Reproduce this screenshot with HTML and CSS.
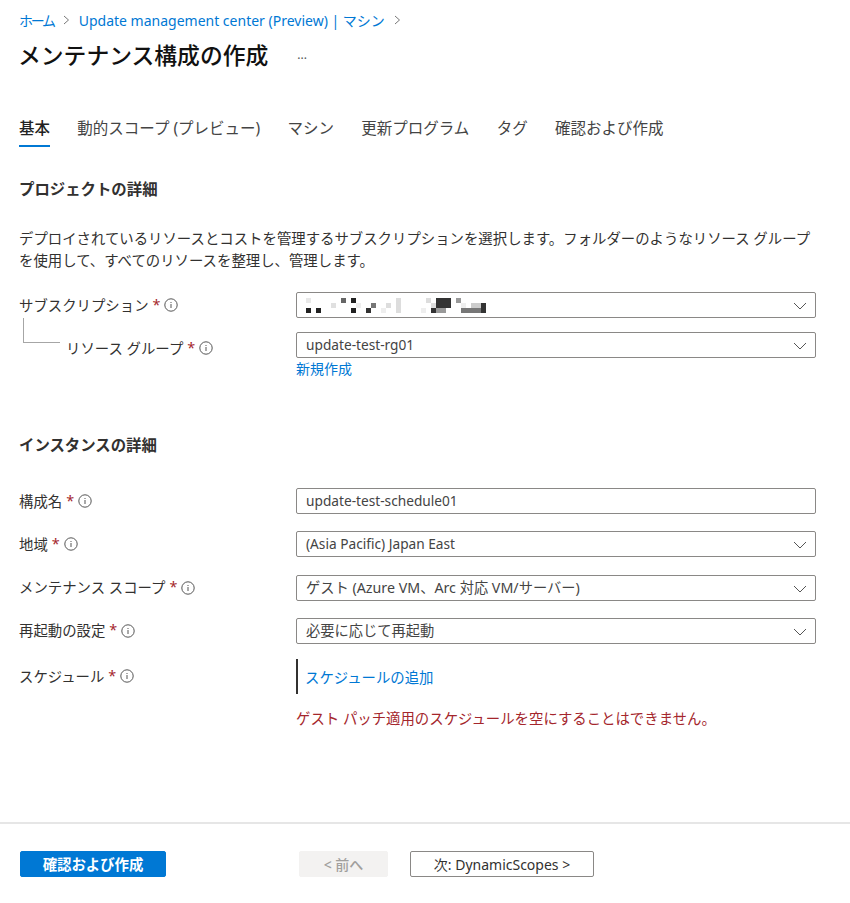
FILE: index.html
```html
<!DOCTYPE html>
<html lang="ja">
<head>
    <meta charset="UTF-8">
    <meta name="viewport" content="width=device-width, initial-scale=1.0">
    <title>メンテナンス構成の作成</title>
    <link rel="stylesheet" href="styles.css">
</head>
<body>

    <svg class="defs" width="0" height="0">
        <symbol id="info" viewBox="0 0 14 14">
            <circle cx="7" cy="7" r="6.2" fill="none" stroke="#555" stroke-width="1"/>
            <rect x="6.5" y="6" width="1" height="4" fill="#555"/>
            <rect x="6.5" y="4" width="1" height="1" fill="#555"/>
        </symbol>
        <symbol id="chevron" viewBox="0 0 14 8">
            <path d="M1 1l6 6 6-6" fill="none" stroke="#555" stroke-width="1"/>
        </symbol>
    </svg>

    <div class="page">
        <nav class="breadcrumb">
            <a class="crumb-home" href="#">ホーム</a>
            <svg class="crumb-sep" viewBox="0 0 7 10"><path d="M1 1l4.500 4-4.500 4" fill="none" stroke="#777"/></svg>
            <a href="#">Update management center (Preview) | マシン</a>
            <svg class="crumb-sep" viewBox="0 0 7 10"><path d="M1 1l4.500 4-4.500 4" fill="none" stroke="#777"/></svg>
        </nav>

        <div class="title-row">
            <h1>メンテナンス構成の作成</h1>
            <span class="more">...</span>
        </div>

        <div class="tabs">
            <a class="tab active" href="#">基本</a>
            <a class="tab" href="#">動的スコープ (プレビュー)</a>
            <a class="tab" href="#">マシン</a>
            <a class="tab" href="#">更新プログラム</a>
            <a class="tab" href="#">タグ</a>
            <a class="tab" href="#">確認および作成</a>
        </div>

        <h2 class="section-project">プロジェクトの詳細</h2>
        <p class="description">デプロイされているリソースとコストを管理するサブスクリプションを選択します。フォルダーのようなリソース グループを使用して、すべてのリソースを整理し、管理します。</p>

        <div class="form form-project">
            <div class="row">
                <label>サブスクリプション <span class="req">*</span> <svg class="info"><use href="#info"/></svg></label>
                <div class="field select">
                    <svg class="mosaic" width="190" height="15" viewBox="0 0 38 3" shape-rendering="crispEdges">
                        <rect x="0" y="0" width="1" height="1" fill="#e8e8e8"/>
                        <rect x="0" y="2" width="1" height="1" fill="#222"/>
                        <rect x="2" y="2" width="1" height="1" fill="#222"/>
                        <rect x="5" y="1" width="1" height="1" fill="#e0e0e0"/>
                        <rect x="7" y="0" width="1" height="1" fill="#666"/>
                        <rect x="9" y="0" width="1" height="1" fill="#222"/>
                        <rect x="9" y="2" width="1" height="1" fill="#222"/>
                        <rect x="10" y="1" width="1" height="1" fill="#eee"/>
                        <rect x="12" y="2" width="1" height="1" fill="#333"/>
                        <rect x="13" y="1" width="1" height="1" fill="#777"/>
                        <rect x="15" y="2" width="1" height="1" fill="#eee"/>
                        <rect x="16" y="1" width="1" height="1" fill="#ddd"/>
                        <rect x="18" y="0" width="1" height="3" fill="#ddd"/>
                        <rect x="23" y="2" width="1" height="1" fill="#eee"/>
                        <rect x="24" y="0" width="1" height="1" fill="#ddd"/>
                        <rect x="25" y="1" width="1" height="1" fill="#ddd"/>
                        <rect x="25" y="2" width="1" height="1" fill="#333"/>
                        <rect x="26" y="0" width="3" height="2" fill="#333"/>
                        <rect x="26" y="2" width="2" height="1" fill="#999"/>
                        <rect x="30" y="0" width="1" height="1" fill="#999"/>
                        <rect x="31" y="1" width="1" height="1" fill="#eee"/>
                        <rect x="31" y="2" width="4" height="1" fill="#777"/>
                        <rect x="33" y="1" width="2" height="1" fill="#ccc"/>
                        <rect x="35" y="1" width="1" height="2" fill="#333"/>
                    </svg>
                    <svg class="chevron"><use href="#chevron"/></svg>
                </div>
            </div>
            <div class="row row-child">
                <label>リソース グループ <span class="req">*</span> <svg class="info"><use href="#info"/></svg></label>
                <div>
                    <div class="field select">update-test-rg01<svg class="chevron"><use href="#chevron"/></svg></div>
                    <a class="link new-link" href="#">新規作成</a>
                </div>
            </div>
        </div>

        <h2 class="section-instance">インスタンスの詳細</h2>

        <div class="form form-instance">
            <div class="row">
                <label>構成名 <span class="req">*</span> <svg class="info"><use href="#info"/></svg></label>
                <div class="field">update-test-schedule01</div>
            </div>
            <div class="row">
                <label>地域 <span class="req">*</span> <svg class="info"><use href="#info"/></svg></label>
                <div class="field select">(Asia Pacific) Japan East<svg class="chevron"><use href="#chevron"/></svg></div>
            </div>
            <div class="row">
                <label>メンテナンス スコープ <span class="req">*</span> <svg class="info"><use href="#info"/></svg></label>
                <div class="field field-ja select">ゲスト (Azure VM、Arc 対応 VM/サーバー)<svg class="chevron"><use href="#chevron"/></svg></div>
            </div>
            <div class="row">
                <label>再起動の設定 <span class="req">*</span> <svg class="info"><use href="#info"/></svg></label>
                <div class="field field-ja select">必要に応じて再起動<svg class="chevron"><use href="#chevron"/></svg></div>
            </div>
            <div class="row row-schedule">
                <label>スケジュール <span class="req">*</span> <svg class="info"><use href="#info"/></svg></label>
                <div>
                    <div class="schedule-box"><a class="link" href="#">スケジュールの追加</a></div>
                    <p class="error">ゲスト パッチ適用のスケジュールを空にすることはできません。</p>
                </div>
            </div>
        </div>
    </div>

    <footer>
        <button class="btn btn-primary">確認および作成</button>
        <button class="btn btn-disabled">&lt; 前へ</button>
        <button class="btn btn-next">次: DynamicScopes &gt;</button>
    </footer>

</body>
</html>
```

FILE: styles.css
```css
html, body {
    margin: 0;
    padding: 0;
}
body {
    width: 850px;
    height: 903px;
    overflow: hidden;
    background-color: #fff;
    color: #323130;
    font-family: "Noto Sans", "Noto Sans CJK JP", sans-serif;
    font-size: 14px;
}
a {
    text-decoration: none;
}
.defs {
    position: absolute;
}
.page {
    height: 822px;
    padding: 0 19px;
    box-sizing: border-box;
}

/* Breadcrumb and title */
.breadcrumb {
    display: flex;
    align-items: center;
    gap: 9px;
    height: 20px;
    padding-top: 10px;
    font-size: 14px;
}
.breadcrumb a {
    color: #0078d4;
}
.breadcrumb .crumb-home {
    letter-spacing: -2.3px;
}
.crumb-sep {
    width: 7px;
    height: 10px;
}
.title-row {
    display: flex;
    align-items: center;
    height: 34px;
    margin-top: 7px;
}
h1 {
    margin: 0 0 0 -1px;
    font-size: 22.8px;
    font-weight: 500;
    color: #111;
}
.more {
    margin-left: 29px;
    font-size: 12px;
    color: #555;
}

/* Tabs */
.tabs {
    display: flex;
    gap: 27.3px;
    margin-top: 45px;
}
.tab {
    height: 31px;
    line-height: 24px;
    font-size: 15.5px;
    color: #444;
    box-sizing: border-box;
}
.tab.active {
    color: #222;
    font-weight: 500;
    border-bottom: 2px solid #0078d4;
}

/* Sections */
h2 {
    margin: 0;
    font-size: 15.4px;
    font-weight: 700;
    line-height: 22px;
    color: #323130;
}
.section-project {
    margin-top: 32px;
}
.section-instance {
    margin-top: 56px;
}
.description {
    width: 800px;
    margin: 27px 0 0;
    font-size: 14.4px;
    line-height: 22px;
}

/* Form */
.form-project {
    margin-top: 20px;
}
.form-instance {
    margin-top: 31px;
}
.row {
    display: grid;
    grid-template-columns: 277px 520px;
    margin-bottom: 14px;
}
.form-instance .row {
    margin-bottom: 17.33px;
}
label {
    display: flex;
    align-items: center;
    gap: 4px;
    height: 26px;
    padding-bottom: 2px;
    box-sizing: border-box;
    font-size: 14.4px;
}
.row-child {
    position: relative;
}
.row-child label {
    height: 32px;
    padding-left: 47px;
}
/* tree line from the subscription row to the resource group row */
.row-child::before {
    content: "";
    position: absolute;
    left: 4px;
    top: -14px;
    width: 36px;
    height: 24px;
    border-left: 1px solid #a6a6a6;
    border-bottom: 1px solid #a6a6a6;
}
.req {
    color: #a4262c;
}
.info {
    width: 14px;
    height: 14px;
    margin-top: 2px;
}
.field {
    display: flex;
    align-items: center;
    height: 26px;
    padding: 0 9px 2px;
    box-sizing: border-box;
    border: 1px solid #8a8886;
    border-radius: 2px;
    font-size: 13.7px;
    color: #444;
}
.field-ja {
    font-size: 14.25px;
}
.select {
    position: relative;
}
.mosaic {
    margin-top: 2px;
}
.chevron {
    position: absolute;
    right: 8px;
    top: 9px;
    width: 14px;
    height: 8px;
}
.link {
    color: #0078d4;
}
.new-link {
    display: block;
    margin-top: 1px;
    line-height: 20px;
    font-size: 14px;
}
.row-schedule {
    margin-top: -2px;
}
.schedule-box {
    display: flex;
    align-items: center;
    height: 35px;
    padding-left: 7px;
    border-left: 2px solid #323130;
    font-size: 14.4px;
}
.error {
    margin: 15px 0 0;
    font-size: 14.4px;
    line-height: 20px;
    color: #a4262c;
}
.row-schedule label {
    height: 34px;
}

/* Footer */
footer {
    display: flex;
    align-items: center;
    height: 81px;
    padding-left: 20px;
    box-sizing: border-box;
    border-top: 2px solid #e6e6e6;
}
.btn {
    height: 26px;
    padding: 0;
    border-radius: 2px;
    box-sizing: border-box;
    font-family: inherit;
    font-size: 14px;
}
.btn-primary {
    width: 146px;
    border: 1px solid #0078d4;
    background-color: #0078d4;
    color: #fff;
    font-size: 14.4px;
    font-weight: 700;
}
.btn-disabled {
    width: 89px;
    margin-left: 133px;
    border: 1px solid #f3f2f1;
    background-color: #f3f2f1;
    color: #a19f9d;
    font-weight: 500;
}
.btn-next {
    width: 184px;
    margin-left: 22px;
    border: 1px solid #8a8886;
    background-color: #fff;
    color: #323130;
}
```
